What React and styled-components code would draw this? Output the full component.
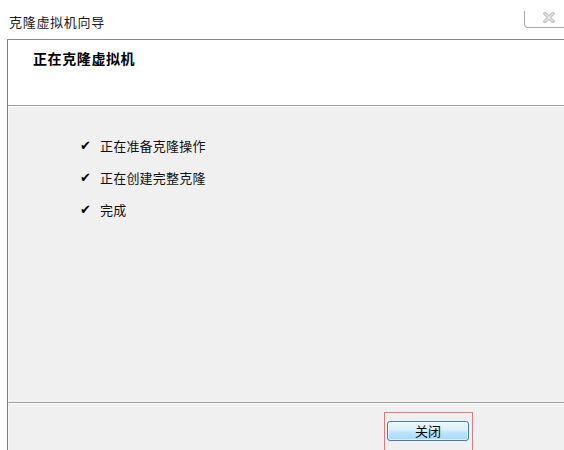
import React from "react";
import styled, { createGlobalStyle } from "styled-components";

const Global = createGlobalStyle`
  html, body { margin: 0; padding: 0; background: #fff; }
  body { font-family: "Noto Sans CJK SC", "Noto Sans", sans-serif; font-size: 13px; color: #000; }
`;

const Window = styled.div`
  width: 564px;
  height: 450px;
  background: #fff;
  overflow: hidden;
  display: flex;
  flex-direction: column;
`;

const TitleBar = styled.div`
  height: 39px;
  flex: none;
  display: flex;
  justify-content: space-between;
  align-items: flex-start;
`;

const Title = styled.div`
  padding: 14px 0 0 9px;
  line-height: 15px;
  font-size: 13px;
  letter-spacing: 0.7px;
  color: #1a1a1a;
`;

const CloseButton = styled.div`
  margin-top: 11px;
  width: 40px;
  height: 17px;
  box-sizing: border-box;
  border-left: 1px solid #a8a8a8;
  border-bottom: 1px solid #a8a8a8;
  border-bottom-left-radius: 4px;
  display: flex;
  justify-content: flex-start;
  align-items: flex-start;
  padding: 1px 0 0 18px;
`;

const Panel = styled.div`
  flex: 1;
  margin-left: 7px;
  border-left: 1px solid #7f7f7f;
  border-top: 1px solid #8a8a8a;
  display: flex;
  flex-direction: column;
  background: #f0f0f0;
`;

const Header = styled.div`
  height: 66px;
  flex: none;
  background: #fff;
  padding: 11px 0 0 25px;
  box-sizing: border-box;
  border-bottom: 1px solid #a0a0a0;
  box-shadow: 0 1px 0 #fff;
`;

const HeaderTitle = styled.div`
  font-weight: bold;
  font-size: 14px;
  letter-spacing: 0.6px;
  line-height: 15px;
`;

const Content = styled.div`
  height: 296px;
  flex: none;
  margin-top: 1px;
  box-sizing: border-box;
  padding: 22px 0 0 71px;
  border-left: 1px solid #fafafa;
  border-bottom: 1px solid #a0a0a0;
  box-shadow: 0 1px 0 #fff;
`;

const Step = styled.div`
  height: 32px;
  display: flex;
  align-items: center;
  gap: 8px;
`;

const Check = styled.span`
  font-family: "DejaVu Sans", sans-serif;
  font-size: 13px;
  width: 12px;
  line-height: 1;
`;

const StepText = styled.span`
  font-size: 13px;
  line-height: 15px;
  letter-spacing: 0.2px;
  color: #111;
`;

const Footer = styled.div`
  flex: 1;
  margin-top: 1px;
  padding: 8px 0 0 375px;
  border-left: 1px solid #fafafa;
`;

const FocusFrame = styled.div`
  width: 89px;
  height: 40px;
  border: 1px solid #e07a7a;
  border-bottom: none;
  padding: 8px 2px 0 2px;
  box-sizing: border-box;
`;

const Button = styled.button`
  width: 82px;
  height: 20px;
  border: 1px solid #3c7fb1;
  border-radius: 3px;
  background: linear-gradient(#eaf6fd 0%, #d9f0fc 45%, #bee6fd 55%, #a7d9f5 100%);
  box-shadow: inset 0 0 0 1px rgba(255, 255, 255, 0.6);
  font-family: "Noto Sans CJK SC", "Noto Sans", sans-serif;
  font-size: 13px;
  line-height: 16px;
  padding: 0;
  color: #000;
`;

const steps = ["正在准备克隆操作", "正在创建完整克隆", "完成"];

export default function App() {
  return (
    <>
      <Global />
      <Window>
        <TitleBar>
          <Title>克隆虚拟机向导</Title>
          <CloseButton>
            <svg width="12" height="11" viewBox="0 0 12 11">
              <path d="M2 1.5 L10 9.5 M10 1.5 L2 9.5" stroke="#c4c4c4" strokeWidth="3.4" fill="none" strokeLinecap="square" />
              <path d="M2 1.5 L10 9.5 M10 1.5 L2 9.5" stroke="#ffffff" strokeWidth="1" fill="none" />
            </svg>
          </CloseButton>
        </TitleBar>
        <Panel>
          <Header>
            <HeaderTitle>正在克隆虚拟机</HeaderTitle>
          </Header>
          <Content>
            {steps.map((s) => (
              <Step key={s}>
                <Check>✔</Check>
                <StepText>{s}</StepText>
              </Step>
            ))}
          </Content>
          <Footer>
            <FocusFrame>
              <Button>关闭</Button>
            </FocusFrame>
          </Footer>
        </Panel>
      </Window>
    </>
  );
}
